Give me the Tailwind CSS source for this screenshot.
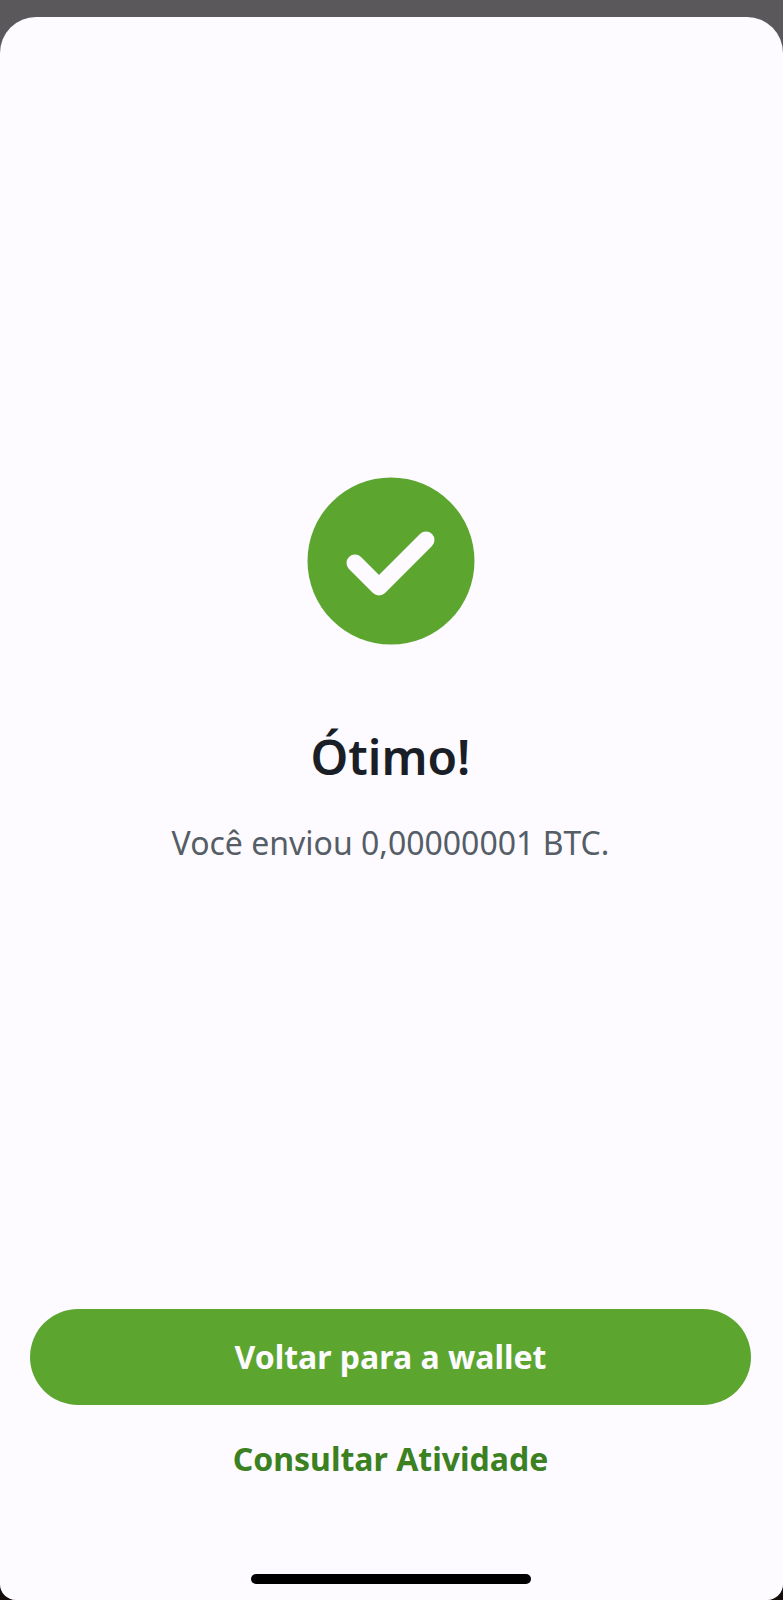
<!DOCTYPE html>
<html lang="pt-BR">
<head>
    <meta charset="UTF-8">
    <meta name="viewport" content="width=device-width, initial-scale=1.0">
    <title>Envio concluído</title>
    <script src="https://cdn.jsdelivr.net/npm/@tailwindcss/browser@4"></script>
</head>
<body class="bg-[#150d0b] font-['Noto_Sans',sans-serif]">

    <!-- Dimmed screen behind the sheet -->
    <div class="flex min-h-screen flex-col overflow-hidden rounded-b-2xl bg-[#5a585a] pt-[17px]">

        <!-- Sheet -->
        <main class="flex grow flex-col rounded-t-[36px] bg-[#fdfbff] pr-8 pb-4 pl-[30px] text-center">

            <!-- Confirmation -->
            <section class="flex grow flex-col items-center justify-center pt-4">
                <svg class="size-[168px]" viewBox="0 0 168 168" fill="none" aria-hidden="true">
                    <circle cx="84" cy="84" r="83.5" fill="#5ca62f"/>
                    <path d="M48 86 L72 110 L119 63" stroke="#fdfbff" stroke-width="17" stroke-linecap="round" stroke-linejoin="round"/>
                </svg>
                <h1 class="mt-20 text-[48px] leading-[64px] font-semibold text-[#1a1e26]">Ótimo!</h1>
                <p class="mt-8 text-[32px] leading-[44px] text-[#555d66]">Você enviou 0,00000001 BTC.</p>
            </section>

            <!-- Actions -->
            <div class="flex flex-col">
                <button type="button" class="h-24 rounded-full bg-[#5ca62f] text-[32px] leading-[44px] font-bold text-[#fdfbff]">Voltar para a wallet</button>
                <a href="#" class="mt-8 text-[32px] leading-[44px] font-bold text-[#3b8021]">Consultar Atividade</a>
            </div>

            <!-- Home indicator -->
            <div class="mx-auto mt-[93px] h-[10px] w-[280px] rounded-full bg-black"></div>
        </main>
    </div>

</body>
</html>
